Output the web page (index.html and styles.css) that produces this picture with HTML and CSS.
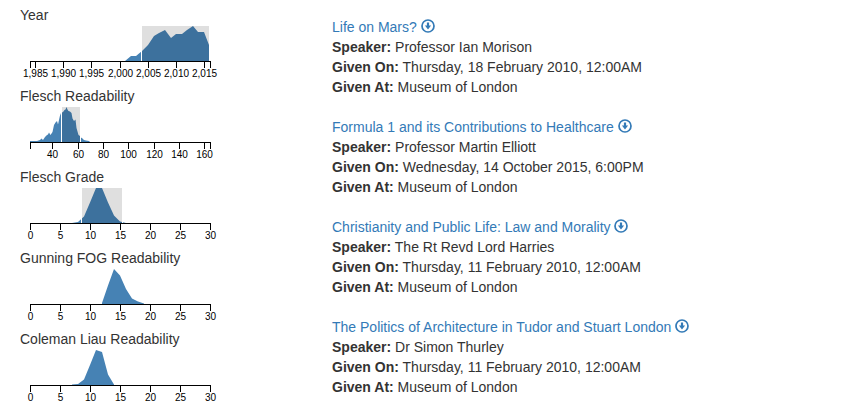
FILE: index.html
```
<!DOCTYPE html>
<html lang="en">
<head>
  <meta charset="UTF-8">
  <meta name="viewport" content="width=device-width, initial-scale=1">
  <title>Lectures</title>
  <link rel="stylesheet" href="styles.css">
</head>
<body>
  <svg class="symbols" aria-hidden="true">
    <symbol id="download" viewBox="0 0 14 14">
      <circle cx="7" cy="7" r="6" fill="none" stroke="currentColor" stroke-width="1.7"/>
      <path d="M5.9 3.4h2.2v3.2h2L7 10.4 3.9 6.6h2z" fill="currentColor"/>
    </symbol>
  </svg>
  <main class="page">
    <aside id="charts" class="charts"></aside>
    <section class="results">
      <article class="lecture">
        <a href="#">Life on Mars? <svg class="icon"><use href="#download"/></svg></a>
        <div><b>Speaker:</b> Professor Ian Morison</div>
        <div><b>Given On:</b> Thursday, 18 February 2010, 12:00AM</div>
        <div><b>Given At:</b> Museum of London</div>
      </article>
      <article class="lecture">
        <a href="#">Formula 1 and its Contributions to Healthcare <svg class="icon"><use href="#download"/></svg></a>
        <div><b>Speaker:</b> Professor Martin Elliott</div>
        <div><b>Given On:</b> Wednesday, 14 October 2015, 6:00PM</div>
        <div><b>Given At:</b> Museum of London</div>
      </article>
      <article class="lecture">
        <a href="#">Christianity and Public Life: Law and Morality <svg class="icon"><use href="#download"/></svg></a>
        <div><b>Speaker:</b> The Rt Revd Lord Harries</div>
        <div><b>Given On:</b> Thursday, 11 February 2010, 12:00AM</div>
        <div><b>Given At:</b> Museum of London</div>
      </article>
      <article class="lecture">
        <a href="#">The Politics of Architecture in Tudor and Stuart London <svg class="icon"><use href="#download"/></svg></a>
        <div><b>Speaker:</b> Dr Simon Thurley</div>
        <div><b>Given On:</b> Thursday, 11 February 2010, 12:00AM</div>
        <div><b>Given At:</b> Museum of London</div>
      </article>
    </section>
  </main>
  <script src="charts.js"></script>
</body>
</html>
```
FILE: styles.css
```
body {
  margin: 0;
  font-family: Arial, "Liberation Sans", sans-serif;
  font-size: 14px;
  line-height: 20px;
  color: #333;
  background: #fff;
}
a {
  color: #337ab7;
  text-decoration: none;
}
a:hover {
  color: #23527c;
  text-decoration: underline;
}
.symbols {
  display: none;
}
.page {
  display: grid;
  grid-template-columns: 200px 1fr;
  column-gap: 112px;
  padding: 5px 20px 0;
}
.results {
  padding-top: 12px;
}
.lecture {
  margin-bottom: 20px;
}
.lecture:last-child {
  margin-bottom: 0;
}
.icon {
  width: 14px;
  height: 14px;
  vertical-align: -1px;
}

/* charts */
.chart-title {
  margin: 0;
  font-size: 14px;
  font-weight: normal;
}
.chart {
  display: block;
  width: 200px;
  height: 61px;
  overflow: visible;
}
.area {
  fill: steelblue;
}
.extent {
  fill: #000;
  fill-opacity: 0.125;
}
.edge {
  stroke: #fff;
  shape-rendering: crispEdges;
}
.axis path,
.axis line {
  fill: none;
  stroke: #000;
  shape-rendering: crispEdges;
}
.axis text {
  font-size: 10px;
  line-height: 10px;
  text-anchor: middle;
  fill: #000;
}
```
FILE: charts.js
```
(function(){
  const width = 180;
  const height = 35;

  // ticks: [x, label], points: outline of the area, brush: [left, right]
  const charts = [
    {
      title: 'Year',
      ticks: [[5, '1,985'], [33, '1,990'], [61, '1,995'], [90, '2,000'], [118, '2,005'], [146, '2,010'], [174, '2,015']],
      points: '95,35 101,30 106,30 112,25 118,19 124,10 129,7 135,4 141,12 146,8 152,8 157,4 163,0 168,6 174,6 179,19 179,35',
      brush: [112, 179]
    },
    {
      title: 'Flesch Readability',
      ticks: [[22, '40'], [48, '60'], [73, '80'], [98, '100'], [124, '120'], [149, '140'], [174, '160']],
      points: '0,35 0,34 7,34 10,33 11.5,31.5 13,33 15,30 17,28 18,27.5 19,25.5 20.5,28 22.5,25 24,18 25.5,15.5 27,14 28,17.5 30,8.5 31,6 33,5 34.5,3 35.5,2.5 36.5,0 37.5,2.5 38.5,4 40,4.5 41.5,6 42.5,11.5 44,14 45.5,12.5 46.5,21 48.5,28 50,29 51,30.5 52.5,31.5 54,33 56,33.5 59,34 60,35',
      brush: [32, 50],
      edges: [31.5, 50.5]
    },
    {
      title: 'Flesch Grade',
      ticks: [[0, '0'], [30, '5'], [60, '10'], [90, '15'], [120, '20'], [150, '25'], [180, '30']],
      points: '42,35 48,34 54,28.5 60,14.5 66,0 72,0 78,14.5 84,27.5 90,33.5 96,35',
      brush: [52, 92],
      edges: [51.5, 92.5]
    },
    {
      title: 'Gunning FOG Readability',
      ticks: [[0, '0'], [30, '5'], [60, '10'], [90, '15'], [120, '20'], [150, '25'], [180, '30']],
      points: '72,35 72,34 78,16.5 84,0 90,6.5 96,20 102,29.5 108,32.5 114,34.5 114,35'
    },
    {
      title: 'Coleman Liau Readability',
      ticks: [[0, '0'], [30, '5'], [60, '10'], [90, '15'], [120, '20'], [150, '25'], [180, '30']],
      points: '42,35 42,34.5 48,34 54,29.5 60,15 66,0 72,2 78,24.5 84,34.5 84,35'
    }
  ];

  function drawBrush(chart) {
    if (!chart.brush) return '';
    const [left, right] = chart.brush;
    const edges = chart.edges || [left - 0.5];
    return `<rect class="extent" x="${left}" y="0" width="${right - left}" height="${height}"/>` +
      edges.map(x => `<line class="edge" x1="${x}" x2="${x}" y1="0" y2="${height}"/>`).join('');
  }

  function drawAxis(chart) {
    const ticks = chart.ticks.map(([x, label]) =>
      `<line x1="${x}" x2="${x}" y2="6"/><text x="${x}" y="8" dy=".71em">${label}</text>`
    ).join('');
    return `<g class="axis" transform="translate(0.5,${height + 0.5})"><path d="M0,6V0H${width}V6"/>${ticks}</g>`;
  }

  document.getElementById('charts').innerHTML = charts.map(chart =>
    `<h2 class="chart-title">${chart.title}</h2>
     <svg class="chart" role="img" aria-label="${chart.title}">
       <g transform="translate(10,1)">
         <polygon class="area" points="${chart.points}"/>
         ${drawBrush(chart)}
         ${drawAxis(chart)}
       </g>
     </svg>`
  ).join('');
})();
```
